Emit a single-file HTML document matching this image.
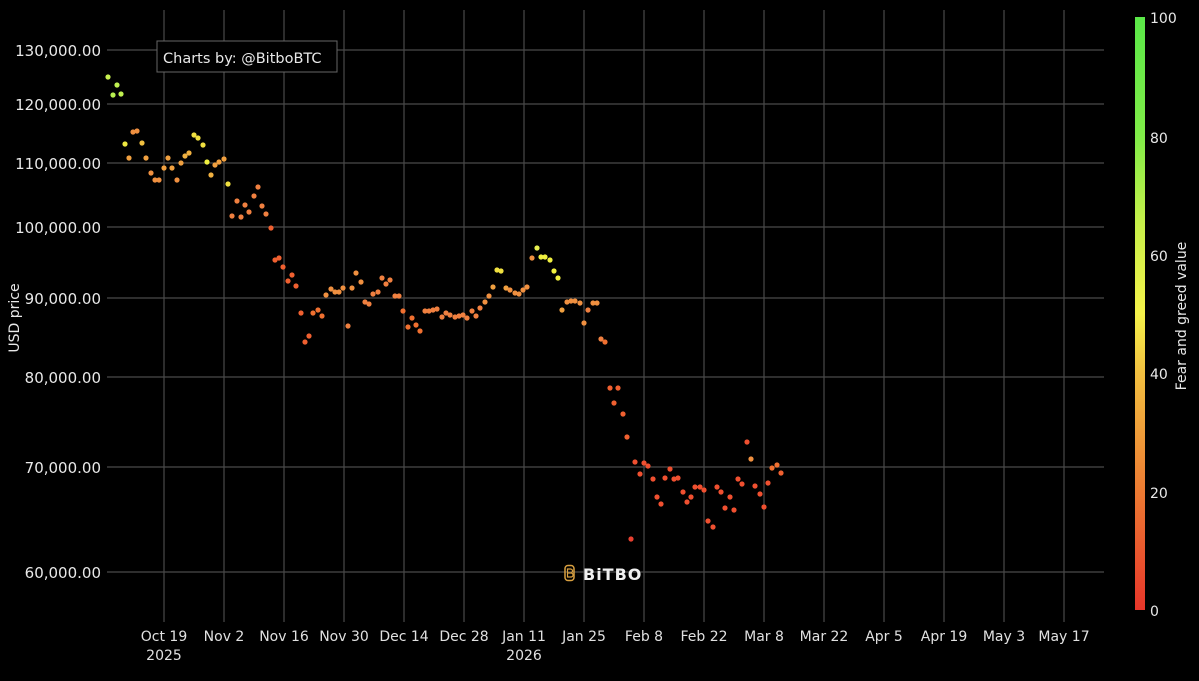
<!DOCTYPE html>
<html><head><meta charset="utf-8"><style>
html,body{margin:0;padding:0;background:#000;width:1199px;height:681px;overflow:hidden}
svg{display:block;font-family:"DejaVu Sans","Liberation Sans",sans-serif}
</style></head><body>
<svg width="1199" height="681" viewBox="0 0 1199 681">
<defs><linearGradient id="cb" x1="0" y1="1" x2="0" y2="0">
<stop offset="0" stop-color="#e8362a"/><stop offset="0.2" stop-color="#ec7a32"/><stop offset="0.4" stop-color="#f2c040"/><stop offset="0.5" stop-color="#f5f24a"/><stop offset="0.65" stop-color="#c8f04a"/><stop offset="0.8" stop-color="#80ec48"/><stop offset="1" stop-color="#5ae848"/></linearGradient></defs>
<g stroke="#4a4a4a" stroke-width="1.2">
<line x1="164" y1="10" x2="164" y2="622"/><line x1="224" y1="10" x2="224" y2="622"/><line x1="284" y1="10" x2="284" y2="622"/><line x1="344" y1="10" x2="344" y2="622"/><line x1="404" y1="10" x2="404" y2="622"/><line x1="464" y1="10" x2="464" y2="622"/><line x1="524" y1="10" x2="524" y2="622"/><line x1="584" y1="10" x2="584" y2="622"/><line x1="644" y1="10" x2="644" y2="622"/><line x1="704" y1="10" x2="704" y2="622"/><line x1="764" y1="10" x2="764" y2="622"/><line x1="824" y1="10" x2="824" y2="622"/><line x1="884" y1="10" x2="884" y2="622"/><line x1="944" y1="10" x2="944" y2="622"/><line x1="1004" y1="10" x2="1004" y2="622"/><line x1="1064" y1="10" x2="1064" y2="622"/>
<line x1="107" y1="50" x2="1104" y2="50"/><line x1="107" y1="104" x2="1104" y2="104"/><line x1="107" y1="163" x2="1104" y2="163"/><line x1="107" y1="227" x2="1104" y2="227"/><line x1="107" y1="298" x2="1104" y2="298"/><line x1="107" y1="377" x2="1104" y2="377"/><line x1="107" y1="467" x2="1104" y2="467"/><line x1="107" y1="572" x2="1104" y2="572"/>
</g>
<g fill="#e8e8e8" font-size="15" text-anchor="end">
<text x="101" y="56">130,000.00</text><text x="101" y="110">120,000.00</text><text x="101" y="169">110,000.00</text><text x="101" y="233">100,000.00</text><text x="101" y="304">90,000.00</text><text x="101" y="383">80,000.00</text><text x="101" y="473">70,000.00</text><text x="101" y="578">60,000.00</text>
</g>
<text transform="translate(19,318) rotate(-90)" fill="#e8e8e8" font-size="14" text-anchor="middle">USD price</text>
<g fill="#e0e0e0" font-size="14" text-anchor="middle">
<text x="164" y="641">Oct 19</text><text x="164" y="660">2025</text><text x="224" y="641">Nov 2</text><text x="284" y="641">Nov 16</text><text x="344" y="641">Nov 30</text><text x="404" y="641">Dec 14</text><text x="464" y="641">Dec 28</text><text x="524" y="641">Jan 11</text><text x="524" y="660">2026</text><text x="584" y="641">Jan 25</text><text x="644" y="641">Feb 8</text><text x="704" y="641">Feb 22</text><text x="764" y="641">Mar 8</text><text x="824" y="641">Mar 22</text><text x="884" y="641">Apr 5</text><text x="944" y="641">Apr 19</text><text x="1004" y="641">May 3</text><text x="1064" y="641">May 17</text>
</g>
<rect x="157" y="41" width="180" height="31" fill="#000" stroke="#666" stroke-width="1"/>
<text x="163" y="63" fill="#e8e8e8" font-size="14.5">Charts by: @BitboBTC</text>
<g transform="translate(564,565)"><rect x="1" y="0.5" width="9" height="15" rx="3" fill="none" stroke="#d9a040" stroke-width="1.5"/><path d="M3.5 4h3a2 2 0 0 1 0 4h-3zM3.5 8h3.5a2 2 0 0 1 0 4h-3.5z" fill="none" stroke="#d9a040" stroke-width="1.2"/></g>
<text x="583" y="580" fill="#f0f0f0" font-size="16" font-weight="bold" letter-spacing="1">BiTBO</text>
<rect x="1135" y="17" width="10" height="593" fill="url(#cb)"/>
<g fill="#e8e8e8" font-size="14"><text x="1150" y="23">100</text><text x="1150" y="143">80</text><text x="1150" y="261">60</text><text x="1150" y="379">40</text><text x="1150" y="498">20</text><text x="1150" y="616">0</text></g>
<text transform="translate(1186,316) rotate(-90)" fill="#e8e8e8" font-size="14" text-anchor="middle">Fear and greed value</text>
<g id="d">
<circle cx="108" cy="77" r="2.6" fill="#c8f050"/><circle cx="113" cy="95" r="2.6" fill="#b8f050"/><circle cx="117" cy="85" r="2.6" fill="#c0f050"/><circle cx="121" cy="94" r="2.6" fill="#c0f050"/>
<circle cx="125" cy="144" r="2.6" fill="#eee840"/><circle cx="129" cy="158" r="2.6" fill="#f0a040"/><circle cx="133" cy="132" r="2.6" fill="#f09040"/><circle cx="137" cy="131" r="2.6" fill="#f09040"/><circle cx="142" cy="143" r="2.6" fill="#f0c040"/><circle cx="146" cy="158" r="2.6" fill="#f0a040"/><circle cx="151" cy="173" r="2.6" fill="#f09040"/><circle cx="155" cy="180" r="2.6" fill="#f09040"/><circle cx="159" cy="180" r="2.6" fill="#f09040"/><circle cx="164" cy="168" r="2.6" fill="#f0a040"/><circle cx="168" cy="158" r="2.6" fill="#f0a040"/><circle cx="172" cy="168" r="2.6" fill="#f0a040"/><circle cx="177" cy="180" r="2.6" fill="#f09040"/><circle cx="181" cy="163" r="2.6" fill="#f0a040"/><circle cx="185" cy="156" r="2.6" fill="#f0b040"/><circle cx="189" cy="153" r="2.6" fill="#f0b040"/><circle cx="194" cy="135" r="2.6" fill="#f0e040"/><circle cx="198" cy="138" r="2.6" fill="#f0e040"/><circle cx="203" cy="145" r="2.6" fill="#f0e040"/><circle cx="207" cy="162" r="2.6" fill="#f0f040"/><circle cx="211" cy="175" r="2.6" fill="#f0b040"/><circle cx="215" cy="165" r="2.6" fill="#f0a040"/><circle cx="219" cy="162" r="2.6" fill="#f0a040"/><circle cx="224" cy="159" r="2.6" fill="#f0a040"/><circle cx="228" cy="184" r="2.6" fill="#f0e040"/><circle cx="232" cy="216" r="2.6" fill="#f08040"/><circle cx="237" cy="201" r="2.6" fill="#f08040"/><circle cx="241" cy="217" r="2.6" fill="#f08040"/><circle cx="245" cy="205" r="2.6" fill="#f08040"/><circle cx="249" cy="212" r="2.6" fill="#f08040"/><circle cx="254" cy="196" r="2.6" fill="#f08040"/><circle cx="258" cy="187" r="2.6" fill="#f08040"/><circle cx="262" cy="206" r="2.6" fill="#f08040"/><circle cx="266" cy="214" r="2.6" fill="#f08040"/><circle cx="271" cy="228" r="2.6" fill="#f06030"/>
<circle cx="275" cy="260" r="2.6" fill="#f06030"/><circle cx="279" cy="258" r="2.6" fill="#f06030"/><circle cx="283" cy="267" r="2.6" fill="#f06030"/><circle cx="288" cy="281" r="2.6" fill="#f06030"/><circle cx="292" cy="275" r="2.6" fill="#f06030"/><circle cx="296" cy="286" r="2.6" fill="#f06030"/><circle cx="301" cy="313" r="2.6" fill="#f06030"/><circle cx="305" cy="342" r="2.6" fill="#f06030"/><circle cx="309" cy="336" r="2.6" fill="#f06030"/><circle cx="313" cy="313" r="2.6" fill="#f07030"/><circle cx="318" cy="310" r="2.6" fill="#f07030"/><circle cx="322" cy="316" r="2.6" fill="#f07030"/><circle cx="326" cy="295" r="2.6" fill="#f09040"/><circle cx="331" cy="289" r="2.6" fill="#f09040"/><circle cx="335" cy="292" r="2.6" fill="#f09040"/><circle cx="339" cy="292" r="2.6" fill="#f09040"/><circle cx="343" cy="288" r="2.6" fill="#f09040"/><circle cx="348" cy="326" r="2.6" fill="#f08040"/><circle cx="352" cy="288" r="2.6" fill="#f09040"/><circle cx="356" cy="273" r="2.6" fill="#f09040"/><circle cx="361" cy="282" r="2.6" fill="#f09040"/><circle cx="365" cy="302" r="2.6" fill="#f08040"/><circle cx="369" cy="304" r="2.6" fill="#f08040"/><circle cx="373" cy="294" r="2.6" fill="#f08040"/><circle cx="378" cy="292" r="2.6" fill="#f08040"/><circle cx="382" cy="278" r="2.6" fill="#f08040"/><circle cx="386" cy="284" r="2.6" fill="#f08040"/><circle cx="390" cy="280" r="2.6" fill="#f08040"/><circle cx="395" cy="296" r="2.6" fill="#f08040"/><circle cx="399" cy="296" r="2.6" fill="#f08040"/><circle cx="403" cy="311" r="2.6" fill="#f07030"/><circle cx="408" cy="327" r="2.6" fill="#f07030"/><circle cx="412" cy="318" r="2.6" fill="#f07030"/><circle cx="416" cy="325" r="2.6" fill="#f07030"/><circle cx="420" cy="331" r="2.6" fill="#f07030"/><circle cx="425" cy="311" r="2.6" fill="#f08040"/><circle cx="429" cy="311" r="2.6" fill="#f08040"/><circle cx="433" cy="310" r="2.6" fill="#f08040"/><circle cx="437" cy="309" r="2.6" fill="#f08040"/><circle cx="442" cy="317" r="2.6" fill="#f08040"/><circle cx="446" cy="313" r="2.6" fill="#f08040"/><circle cx="450" cy="315" r="2.6" fill="#f08040"/><circle cx="455" cy="317" r="2.6" fill="#f08040"/><circle cx="459" cy="316" r="2.6" fill="#f08040"/><circle cx="463" cy="315" r="2.6" fill="#f08040"/><circle cx="467" cy="318" r="2.6" fill="#f08040"/><circle cx="472" cy="311" r="2.6" fill="#f08040"/><circle cx="476" cy="316" r="2.6" fill="#f08040"/><circle cx="480" cy="308" r="2.6" fill="#f08040"/><circle cx="485" cy="302" r="2.6" fill="#f09040"/><circle cx="489" cy="296" r="2.6" fill="#f09040"/><circle cx="493" cy="287" r="2.6" fill="#f0a040"/><circle cx="497" cy="270" r="2.6" fill="#f0e040"/><circle cx="501" cy="271" r="2.6" fill="#f0e040"/><circle cx="506" cy="288" r="2.6" fill="#f0a040"/><circle cx="510" cy="290" r="2.6" fill="#f09040"/><circle cx="515" cy="293" r="2.6" fill="#f09040"/><circle cx="519" cy="294" r="2.6" fill="#f09040"/><circle cx="523" cy="290" r="2.6" fill="#f09040"/><circle cx="527" cy="287" r="2.6" fill="#f09040"/>
<circle cx="532" cy="258" r="2.6" fill="#f09040"/><circle cx="537" cy="248" r="2.6" fill="#e8f050"/><circle cx="541" cy="257" r="2.6" fill="#f0f040"/><circle cx="545" cy="257" r="2.6" fill="#f0f040"/><circle cx="550" cy="260" r="2.6" fill="#f0f040"/><circle cx="554" cy="271" r="2.6" fill="#f0f040"/><circle cx="558" cy="278" r="2.6" fill="#f0f040"/>
<circle cx="562" cy="310" r="2.6" fill="#f0a040"/><circle cx="567" cy="302" r="2.6" fill="#f09040"/><circle cx="571" cy="301" r="2.6" fill="#f09040"/><circle cx="575" cy="301" r="2.6" fill="#f09040"/><circle cx="580" cy="303" r="2.6" fill="#f09040"/><circle cx="584" cy="323" r="2.6" fill="#f09040"/><circle cx="588" cy="310" r="2.6" fill="#f08040"/><circle cx="593" cy="303" r="2.6" fill="#f09040"/><circle cx="597" cy="303" r="2.6" fill="#f09040"/><circle cx="601" cy="339" r="2.6" fill="#f08040"/><circle cx="605" cy="342" r="2.6" fill="#f07030"/><circle cx="610" cy="388" r="2.6" fill="#f06030"/><circle cx="614" cy="403" r="2.6" fill="#f06030"/><circle cx="618" cy="388" r="2.6" fill="#f06030"/><circle cx="623" cy="414" r="2.6" fill="#f06030"/><circle cx="627" cy="437" r="2.6" fill="#f06030"/><circle cx="631" cy="539" r="2.6" fill="#e84030"/><circle cx="635" cy="462" r="2.6" fill="#f05030"/><circle cx="640" cy="474" r="2.6" fill="#f05030"/><circle cx="644" cy="463" r="2.6" fill="#f05030"/><circle cx="648" cy="466" r="2.6" fill="#f05030"/><circle cx="653" cy="479" r="2.6" fill="#f05030"/><circle cx="657" cy="497" r="2.6" fill="#f05030"/><circle cx="661" cy="504" r="2.6" fill="#f05030"/><circle cx="665" cy="478" r="2.6" fill="#f05030"/><circle cx="670" cy="469" r="2.6" fill="#f05030"/><circle cx="674" cy="479" r="2.6" fill="#f05030"/><circle cx="678" cy="478" r="2.6" fill="#f05030"/><circle cx="683" cy="492" r="2.6" fill="#f05030"/><circle cx="687" cy="502" r="2.6" fill="#f05030"/><circle cx="691" cy="497" r="2.6" fill="#f05030"/><circle cx="695" cy="487" r="2.6" fill="#f05030"/><circle cx="700" cy="487" r="2.6" fill="#f05030"/><circle cx="704" cy="490" r="2.6" fill="#f05030"/><circle cx="708" cy="521" r="2.6" fill="#f05030"/><circle cx="713" cy="527" r="2.6" fill="#f05030"/><circle cx="717" cy="487" r="2.6" fill="#f05030"/><circle cx="721" cy="492" r="2.6" fill="#f05030"/><circle cx="725" cy="508" r="2.6" fill="#f05030"/><circle cx="730" cy="497" r="2.6" fill="#f05030"/><circle cx="734" cy="510" r="2.6" fill="#f05030"/><circle cx="738" cy="479" r="2.6" fill="#f05030"/><circle cx="742" cy="484" r="2.6" fill="#f05030"/><circle cx="747" cy="442" r="2.6" fill="#f05030"/><circle cx="751" cy="459" r="2.6" fill="#f09040"/><circle cx="755" cy="486" r="2.6" fill="#f05030"/><circle cx="760" cy="494" r="2.6" fill="#f05030"/><circle cx="764" cy="507" r="2.6" fill="#f05030"/><circle cx="768" cy="483" r="2.6" fill="#f05030"/><circle cx="772" cy="468" r="2.6" fill="#f07030"/><circle cx="777" cy="465" r="2.6" fill="#f07030"/><circle cx="781" cy="473" r="2.6" fill="#f06030"/>
</g>
</svg>
</body></html>
